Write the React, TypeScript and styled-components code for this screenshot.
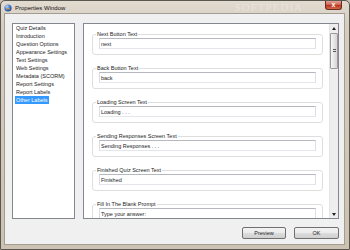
import React from 'react'
import styled, { createGlobalStyle } from 'styled-components'

// Data
const sections: string[] = [
  'Quiz Details',
  'Introduction',
  'Question Options',
  'Appearance Settings',
  'Text Settings',
  'Web Settings',
  'Metadata (SCORM)',
  'Report Settings',
  'Report Labels',
  'Other Labels',
]

const labels: [string, string][] = [
  ['Next Button Text', 'next'],
  ['Back Button Text', 'back'],
  ['Loading Screen Text', 'Loading . . .'],
  ['Sending Responses Screen Text', 'Sending Responses . . .'],
  ['Finished Quiz Screen Text', 'Finished'],
  ['Fill In The Blank Prompt', 'Type your answer:'],
]

export default function App(): JSX.Element {
  return (
    <>
      <GlobalStyle />
      <Window>
        <TitleBar>
          <AppIcon viewBox='0 0 8 8'>
            <defs>
              <radialGradient id='ball' cx='0.35' cy='0.3' r='0.8'>
                <stop offset='0' stopColor='#bcd6f5' />
                <stop offset='0.5' stopColor='#3f78c9' />
                <stop offset='1' stopColor='#173f80' />
              </radialGradient>
            </defs>
            <circle cx='4' cy='4' r='3.6' fill='url(#ball)' />
            <path d='M2.2 5.6 C3 4.4 4.6 4.2 5.9 5.2' stroke='#f0a030' strokeWidth='1' fill='none' />
          </AppIcon>
          <Title>Properties Window</Title>
          <Watermark>SOFTPEDIA</Watermark>
          <CloseButton>x</CloseButton>
        </TitleBar>

        <Client>
          <Body>
            <ListBox>
              {sections.map((s) => (
                <ListItem key={s}>
                  <ItemText $selected={s === 'Other Labels'}>{s}</ItemText>
                </ListItem>
              ))}
            </ListBox>

            <Panel>
              <Scroller>
                {labels.map(([label, value]) => (
                  <Group key={label}>
                    <Legend>{label}</Legend>
                    <TextBox readOnly defaultValue={value} />
                  </Group>
                ))}
              </Scroller>

              <ScrollBar>
                <ScrollArrow>
                  <svg width='4' height='3' viewBox='0 0 4 3'>
                    <path d='M0 3 L2 0 L4 3 Z' fill='#222' />
                  </svg>
                </ScrollArrow>
                <Thumb>
                  <Grip />
                </Thumb>
                <Track />
                <ScrollArrow>
                  <svg width='4' height='3' viewBox='0 0 4 3'>
                    <path d='M0 0 L4 0 L2 3 Z' fill='#222' />
                  </svg>
                </ScrollArrow>
              </ScrollBar>
            </Panel>
          </Body>

          <Footer>
            <Button $width={44}>Preview</Button>
            <Button $width={45}>OK</Button>
          </Footer>
        </Client>
      </Window>
    </>
  )
}

const GlobalStyle = createGlobalStyle`
  html, body {
    margin: 0;
    padding: 0;
    background: #c9c1b3;
  }

  body {
    font-family: "Liberation Sans", Arial, sans-serif;
    color: #1c1c1c;
  }
`

const Window = styled.div`
  width: 350px;
  height: 250px;
  box-sizing: border-box;
  border: 1px solid #5a5650;
  border-radius: 5px 5px 1px 1px;
  background: linear-gradient(180deg, #e2dbd0 0%, #d5cdc0 10%, #cbc2b2 100%);
  padding: 0 4px 4px 3px;
  display: flex;
  flex-direction: column;
  overflow: hidden;
`

const TitleBar = styled.div`
  height: 12px;
  display: flex;
  align-items: center;
`

const AppIcon = styled.svg`
  width: 8px;
  height: 8px;
  margin: 1px 3px 0 0;
`

const Title = styled.span`
  font-size: 6px;
  color: #111;
  margin-top: 1px;
`

const Watermark = styled.span`
  margin-left: auto;
  font-family: "Liberation Serif", serif;
  font-size: 11px;
  letter-spacing: 1px;
  color: rgba(255, 255, 255, 0.3);
`

const CloseButton = styled.div`
  align-self: flex-start;
  width: 17px;
  height: 9px;
  margin: 0 3px 0 22px;
  box-sizing: border-box;
  border: 1px solid #6b2a1f;
  border-top: none;
  border-radius: 0 0 3px 3px;
  background: linear-gradient(180deg, #e3a497 0%, #cf6552 45%, #b8361f 55%, #d4694c 100%);
  color: #fff;
  font-size: 7px;
  font-weight: bold;
  line-height: 7px;
  text-align: center;
`

const Client = styled.div`
  flex: 1;
  min-height: 0;
  display: flex;
  flex-direction: column;
  box-sizing: border-box;
  border: 1px solid #a39c90;
  background: #f0f0f0;
  padding: 9px 5px 5px 7px;
`

const Body = styled.div`
  flex: 1;
  min-height: 0;
  display: flex;
  gap: 8px;
`

const ListBox = styled.ul`
  width: 63px;
  margin: 0;
  padding: 0;
  list-style: none;
  box-sizing: border-box;
  border: 1px solid #828790;
  background: #fff;
`

const ListItem = styled.li`
  height: 8px;
  line-height: 8px;
  padding-left: 2px;
  font-size: 5.5px;
  white-space: nowrap;
`

const ItemText = styled.span<{ $selected?: boolean }>`
  display: inline-block;
  padding: 0 1px;
  background: ${(p) => (p.$selected ? '#3399ff' : 'transparent')};
  color: ${(p) => (p.$selected ? '#fff' : 'inherit')};
`

const Panel = styled.div`
  flex: 1;
  display: flex;
  box-sizing: border-box;
  border: 1px solid #828790;
  background: #fff;
  overflow: hidden;
`

const Scroller = styled.div`
  flex: 1;
  min-width: 0;
  overflow: hidden;
  display: flex;
  flex-direction: column;
  gap: 10px;
  padding: 7px 6px 0 8px;
`

const Group = styled.fieldset`
  margin: 0;
  min-width: 0;
  padding: 0 6px 5px 6px;
  border: 1px solid #dedede;
  border-radius: 3px;
`

const Legend = styled.legend`
  font-size: 5.5px;
  line-height: 7px;
  padding: 0 1px;
  margin-left: -3px;
`

const TextBox = styled.input`
  display: block;
  width: 100%;
  height: 11px;
  box-sizing: border-box;
  margin: 0;
  padding: 0 1px;
  border: 1px solid;
  border-color: #b5b8be #dcdfe4 #e3e7ec #dadde2;
  background: #fff;
  color: #1c1c1c;
  font-family: inherit;
  font-size: 5.5px;
  outline: none;
`

const ScrollBar = styled.div`
  width: 8px;
  display: flex;
  flex-direction: column;
  background: #eeeeee;
  border-left: 1px solid #e4e4e4;
`

const ScrollArrow = styled.div`
  height: 8px;
  display: flex;
  align-items: center;
  justify-content: center;
`

const Thumb = styled.div`
  height: 36px;
  margin: 1px 0 0;
  box-sizing: border-box;
  border: 1px solid #9a9a9a;
  border-radius: 1px;
  background: linear-gradient(90deg, #f6f6f6 0%, #e6e6e6 50%, #d6d6d6 100%);
  display: flex;
  align-items: center;
  justify-content: center;
`

const Grip = styled.div`
  width: 3px;
  height: 4px;
  background: repeating-linear-gradient(180deg, #555 0px, #555 1px, transparent 1px, transparent 2px);
`

const Track = styled.div`
  flex: 1;
`

const Footer = styled.div`
  display: flex;
  justify-content: flex-end;
  gap: 8px;
  margin-top: 8px;
`

const Button = styled.button<{ $width: number }>`
  width: ${(p) => p.$width}px;
  height: 12px;
  padding: 0;
  box-sizing: border-box;
  border: 1px solid #707070;
  border-radius: 2px;
  background: linear-gradient(180deg, #f2f2f2 0%, #ebebeb 50%, #dddddd 51%, #cfcfcf 100%);
  color: #1c1c1c;
  font-family: inherit;
  font-size: 5.5px;
  line-height: 10px;
`
